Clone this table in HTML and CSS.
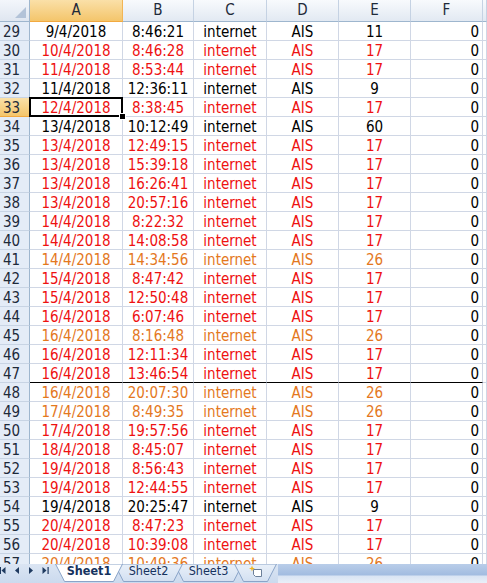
FILE: index.html
```html
<!DOCTYPE html>
<html>
<head>
<meta charset="utf-8">
<link rel="stylesheet" href="styles.css">
</head>
<body>
<div class="sheet">
  <div class="row head">
    <div class="corner"><svg width="29" height="21" viewBox="0 0 29 21"><polygon points="26,7 26,18 15,18" fill="#b3c3d8"/></svg></div>
    <div class="ch sel">A</div><div class="ch">B</div><div class="ch">C</div><div class="ch">D</div><div class="ch">E</div><div class="ch">F</div><div class="ch"></div>
  </div>
  <div class="row k"><div class="rh">29</div><div class="c">9/4/2018</div><div class="c">8:46:21</div><div class="c">internet</div><div class="c">AIS</div><div class="c">11</div><div class="c f">0</div><div class="c"></div></div>
  <div class="row r"><div class="rh">30</div><div class="c">10/4/2018</div><div class="c">8:46:28</div><div class="c">internet</div><div class="c">AIS</div><div class="c">17</div><div class="c f">0</div><div class="c"></div></div>
  <div class="row r"><div class="rh">31</div><div class="c">11/4/2018</div><div class="c">8:53:44</div><div class="c">internet</div><div class="c">AIS</div><div class="c">17</div><div class="c f">0</div><div class="c"></div></div>
  <div class="row k"><div class="rh">32</div><div class="c">11/4/2018</div><div class="c">12:36:11</div><div class="c">internet</div><div class="c">AIS</div><div class="c">9</div><div class="c f">0</div><div class="c"></div></div>
  <div class="row r"><div class="rh selrow">33</div><div class="c active">12/4/2018<span class="selbox"><span class="handle"></span></span></div><div class="c">8:38:45</div><div class="c">internet</div><div class="c">AIS</div><div class="c">17</div><div class="c f">0</div><div class="c"></div></div>
  <div class="row k"><div class="rh">34</div><div class="c">13/4/2018</div><div class="c">10:12:49</div><div class="c">internet</div><div class="c">AIS</div><div class="c">60</div><div class="c f">0</div><div class="c"></div></div>
  <div class="row r"><div class="rh">35</div><div class="c">13/4/2018</div><div class="c">12:49:15</div><div class="c">internet</div><div class="c">AIS</div><div class="c">17</div><div class="c f">0</div><div class="c"></div></div>
  <div class="row r"><div class="rh">36</div><div class="c">13/4/2018</div><div class="c">15:39:18</div><div class="c">internet</div><div class="c">AIS</div><div class="c">17</div><div class="c f">0</div><div class="c"></div></div>
  <div class="row r"><div class="rh">37</div><div class="c">13/4/2018</div><div class="c">16:26:41</div><div class="c">internet</div><div class="c">AIS</div><div class="c">17</div><div class="c f">0</div><div class="c"></div></div>
  <div class="row r"><div class="rh">38</div><div class="c">13/4/2018</div><div class="c">20:57:16</div><div class="c">internet</div><div class="c">AIS</div><div class="c">17</div><div class="c f">0</div><div class="c"></div></div>
  <div class="row r"><div class="rh">39</div><div class="c">14/4/2018</div><div class="c">8:22:32</div><div class="c">internet</div><div class="c">AIS</div><div class="c">17</div><div class="c f">0</div><div class="c"></div></div>
  <div class="row r"><div class="rh">40</div><div class="c">14/4/2018</div><div class="c">14:08:58</div><div class="c">internet</div><div class="c">AIS</div><div class="c">17</div><div class="c f">0</div><div class="c"></div></div>
  <div class="row o"><div class="rh">41</div><div class="c">14/4/2018</div><div class="c">14:34:56</div><div class="c">internet</div><div class="c">AIS</div><div class="c">26</div><div class="c f">0</div><div class="c"></div></div>
  <div class="row r"><div class="rh">42</div><div class="c">15/4/2018</div><div class="c">8:47:42</div><div class="c">internet</div><div class="c">AIS</div><div class="c">17</div><div class="c f">0</div><div class="c"></div></div>
  <div class="row r"><div class="rh">43</div><div class="c">15/4/2018</div><div class="c">12:50:48</div><div class="c">internet</div><div class="c">AIS</div><div class="c">17</div><div class="c f">0</div><div class="c"></div></div>
  <div class="row r"><div class="rh">44</div><div class="c">16/4/2018</div><div class="c">6:07:46</div><div class="c">internet</div><div class="c">AIS</div><div class="c">17</div><div class="c f">0</div><div class="c"></div></div>
  <div class="row o"><div class="rh">45</div><div class="c">16/4/2018</div><div class="c">8:16:48</div><div class="c">internet</div><div class="c">AIS</div><div class="c">26</div><div class="c f">0</div><div class="c"></div></div>
  <div class="row r"><div class="rh">46</div><div class="c">16/4/2018</div><div class="c">12:11:34</div><div class="c">internet</div><div class="c">AIS</div><div class="c">17</div><div class="c f">0</div><div class="c"></div></div>
  <div class="row r cut"><div class="rh">47</div><div class="c">16/4/2018</div><div class="c">13:46:54</div><div class="c">internet</div><div class="c">AIS</div><div class="c">17</div><div class="c f">0</div><div class="c"></div></div>
  <div class="row o"><div class="rh">48</div><div class="c">16/4/2018</div><div class="c">20:07:30</div><div class="c">internet</div><div class="c">AIS</div><div class="c">26</div><div class="c f">0</div><div class="c"></div></div>
  <div class="row o"><div class="rh">49</div><div class="c">17/4/2018</div><div class="c">8:49:35</div><div class="c">internet</div><div class="c">AIS</div><div class="c">26</div><div class="c f">0</div><div class="c"></div></div>
  <div class="row r"><div class="rh">50</div><div class="c">17/4/2018</div><div class="c">19:57:56</div><div class="c">internet</div><div class="c">AIS</div><div class="c">17</div><div class="c f">0</div><div class="c"></div></div>
  <div class="row r"><div class="rh">51</div><div class="c">18/4/2018</div><div class="c">8:45:07</div><div class="c">internet</div><div class="c">AIS</div><div class="c">17</div><div class="c f">0</div><div class="c"></div></div>
  <div class="row r"><div class="rh">52</div><div class="c">19/4/2018</div><div class="c">8:56:43</div><div class="c">internet</div><div class="c">AIS</div><div class="c">17</div><div class="c f">0</div><div class="c"></div></div>
  <div class="row r"><div class="rh">53</div><div class="c">19/4/2018</div><div class="c">12:44:55</div><div class="c">internet</div><div class="c">AIS</div><div class="c">17</div><div class="c f">0</div><div class="c"></div></div>
  <div class="row k"><div class="rh">54</div><div class="c">19/4/2018</div><div class="c">20:25:47</div><div class="c">internet</div><div class="c">AIS</div><div class="c">9</div><div class="c f">0</div><div class="c"></div></div>
  <div class="row r"><div class="rh">55</div><div class="c">20/4/2018</div><div class="c">8:47:23</div><div class="c">internet</div><div class="c">AIS</div><div class="c">17</div><div class="c f">0</div><div class="c"></div></div>
  <div class="row r"><div class="rh">56</div><div class="c">20/4/2018</div><div class="c">10:39:08</div><div class="c">internet</div><div class="c">AIS</div><div class="c">17</div><div class="c f">0</div><div class="c"></div></div>
  <div class="row o"><div class="rh">57</div><div class="c">20/4/2018</div><div class="c">10:49:36</div><div class="c">internet</div><div class="c">AIS</div><div class="c">26</div><div class="c f">0</div><div class="c"></div></div>
</div>
<div class="tabbar">
  <div class="nav">
    <svg width="56" height="19" viewBox="0 0 56 19">
      <g fill="#1f3a60">
        <rect x="0" y="3" width="1" height="7"/>
        <polygon points="1.5,6.5 5.5,3 5.5,10"/>
        <polygon points="15,6.5 19,3 19,10"/>
        <polygon points="33,6.5 29,3 29,10"/>
        <polygon points="46.5,6.5 42.5,3 42.5,10"/>
        <rect x="47.5" y="3" width="1.2" height="7"/>
      </g>
    </svg>
  </div>
  <div class="tab active w68">
    <svg class="shape" width="68" height="18" viewBox="0 0 68 18"><polygon points="0.5,0 67.5,0 58.5,17.5 9.5,17.5" fill="#ffffff" stroke="#8aa4c8"/></svg>
    <span class="label">Sheet1</span>
  </div>
  <div class="tab w69">
    <svg class="shape" width="69" height="18" viewBox="0 0 69 18"><polygon points="0.5,0 68.5,0 59.5,17.5 9.5,17.5" fill="url(#tg)" stroke="#8aa4c8"/>
      <defs><linearGradient id="tg" x1="0" y1="0" x2="0" y2="1"><stop offset="0" stop-color="#e9f0f9"/><stop offset="1" stop-color="#d3e0f1"/></linearGradient></defs></svg>
    <span class="label">Sheet2</span>
  </div>
  <div class="tab w69 t3">
    <svg class="shape" width="69" height="18" viewBox="0 0 69 18"><polygon points="0.5,0 68.5,0 59.5,17.5 9.5,17.5" fill="url(#tg)" stroke="#8aa4c8"/></svg>
    <span class="label">Sheet3</span>
  </div>
  <div class="tab w43 t4">
    <svg class="shape" width="43" height="18" viewBox="0 0 43 18"><polygon points="0.5,0 42.5,0 33.5,17.5 9.5,17.5" fill="url(#tg)" stroke="#8aa4c8"/></svg>
    <svg class="ins" width="16" height="13" viewBox="0 0 16 13">
      <path d="M5.5 4.5 H13.5 V11.5 H7.5 L5.5 9.5 Z" fill="#ffffff" stroke="#6b7f99"/>
      <path d="M4 0.5 L4.8 2.8 L7 3.5 L4.8 4.2 L4 6.5 L3.2 4.2 L1 3.5 L3.2 2.8 Z" fill="#f2b51c"/>
    </svg>
  </div>
  <div class="scroll"></div>
</div>
</body>
</html>
```

FILE: styles.css
```css
html, body {
  margin: 0;
  padding: 0;
}
body {
  width: 487px;
  height: 583px;
  overflow: hidden;
  background: #ffffff;
  font-family: "DejaVu Sans Condensed", "DejaVu Sans", sans-serif;
}
.sheet {
  height: 564px;
  overflow: hidden;
}
.row {
  display: grid;
  grid-template-columns: 30px 93px 71px 73px 72px 72px 72px 1fr;
  height: 19px;
}
.row.head {
  height: 22px;
}
.row > div {
  box-sizing: border-box;
  border-right: 1px solid #d0d7e5;
  border-bottom: 1px solid #d0d7e5;
  display: flex;
  align-items: flex-end;
  justify-content: center;
  font-size: 15px;
  line-height: 15px;
  white-space: nowrap;
  overflow: hidden;
}
.corner {
  background: linear-gradient(#f3f6fb, #dfe6f0);
  border-right-color: #9eb6ce !important;
  border-bottom-color: #9eb6ce !important;
}
.corner svg { display: block; }
.ch {
  background: linear-gradient(#f8fafd, #e2e9f2);
  border-right-color: #c5d2e3 !important;
  border-bottom-color: #9eb6ce !important;
  color: #1e2a3a;
  align-items: center !important;
}
.ch.sel {
  background: linear-gradient(#fae0a8, #f4c56b);
  border-right-color: #f2b555 !important;
  border-bottom-color: #f2a93f !important;
}
.rh {
  background: #e4ecf7;
  border-right-color: #9eb6ce !important;
  border-bottom-color: #c8d4e4 !important;
  color: #1e2a3a;
  justify-content: flex-start !important;
  padding-left: 3px;
}
.rh.selrow {
  background: linear-gradient(#fae0a8, #f4c56b);
  border-bottom-color: #f2a93f !important;
}
.row.k .c { color: #000000; }
.row.r .c { color: #ee1111; }
.row.o .c { color: #e4781e; }
.row .c.f {
  color: #000000;
  justify-content: flex-end;
  padding-right: 3px;
}
.row.cut .c:not(:last-child) {
  border-bottom-color: #000000;
}
.c.active {
  position: relative;
  overflow: visible;
}
.selbox {
  position: absolute;
  left: -1px;
  top: -1px;
  right: -1px;
  bottom: -1px;
  border: 2px solid #000000;
  z-index: 2;
}
.handle {
  position: absolute;
  right: -4px;
  bottom: -4px;
  width: 5px;
  height: 5px;
  background: #000000;
  box-shadow: 0 0 0 1px #ffffff;
}

.tabbar {
  height: 19px;
  display: flex;
  background: linear-gradient(#dbe5f3, #cbdaee);
  overflow: hidden;
}
.nav {
  width: 56px;
  flex: none;
}
.nav svg { display: block; }
.tab {
  position: relative;
  flex: none;
  height: 18px;
  display: flex;
  justify-content: center;
  font-size: 12.5px;
  line-height: 12px;
  color: #15325e;
}
.tab + .tab { margin-left: -9px; }
.tab.active { z-index: 3; margin-left: -1px; }
.tab.t3 { z-index: 0; }
.w68 { width: 68px; }
.w69 { width: 69px; z-index: 1; }
.w43 { width: 43px; }
.tab .shape {
  position: absolute;
  left: 0;
  top: 0;
  display: block;
}
.label {
  position: relative;
  padding-top: 1px;
}
.active .label {
  font-weight: bold;
  color: #15325e;
}
.ins {
  position: relative;
  display: block;
  margin-top: 1px;
}
.scroll {
  flex: 1;
  margin-left: 1px;
  background: linear-gradient(#b9cde9 0px, #a2bce0 11px, #d9e4f3 12px, #e9eff8 19px);
}
```
